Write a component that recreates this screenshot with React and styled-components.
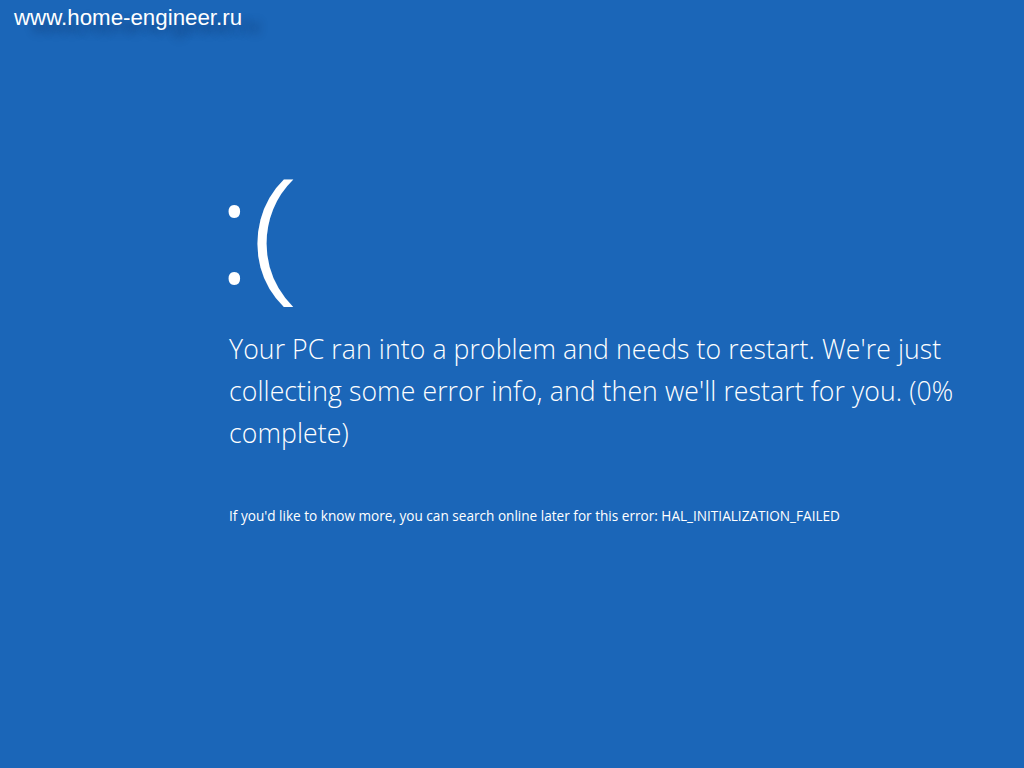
import React from "react";
import styled, { createGlobalStyle } from "styled-components";

const GlobalStyle = createGlobalStyle`
  html, body {
    margin: 0;
    padding: 0;
    background: #1b66b8;
  }
`;

const Screen = styled.div`
  position: relative;
  width: 1024px;
  height: 768px;
  overflow: hidden;
  background: #1b66b8;
  color: #ffffff;
  font-family: "Open Sans", "Noto Sans", sans-serif;
`;

const Watermark = styled.div`
  position: absolute;
  left: 14px;
  top: 5px;
  font-family: "Liberation Sans", Arial, sans-serif;
  font-size: 22.3px;
  color: #ffffff;
  text-shadow: 18px 8px 8px rgba(10, 30, 70, 0.4);
`;

const Content = styled.main`
  display: flex;
  flex-direction: column;
  padding: 153px 0 0 229px;
`;

const Face = styled.div`
  font-size: 145px;
  font-weight: 300;
  line-height: 150px;
  margin-left: -12px;
`;

const Mouth = styled.span`
  display: inline-block;
  margin-left: -2px;
  transform: scaleX(1.25);
  transform-origin: left center;
`;

const Message = styled.p`
  margin: 25px 0 0;
  font-size: 26.6px;
  font-weight: 300;
  line-height: 42px;
  letter-spacing: 0.1px;
`;

const Hint = styled.p`
  margin: 53px 0 0;
  font-size: 13.6px;
  font-weight: 400;
  line-height: 18px;
`;

export default function App() {
  return (
    <Screen>
      <GlobalStyle />
      <Watermark>www.home-engineer.ru</Watermark>
      <Content>
        <Face>
          :<Mouth>(</Mouth>
        </Face>
        <Message>
          Your PC ran into a problem and needs to restart. We're just
          <br />
          collecting some error info, and then we'll restart for you. (0%
          <br />
          complete)
        </Message>
        <Hint>
          If you'd like to know more, you can search online later for this
          error: HAL_INITIALIZATION_FAILED
        </Hint>
      </Content>
    </Screen>
  );
}
